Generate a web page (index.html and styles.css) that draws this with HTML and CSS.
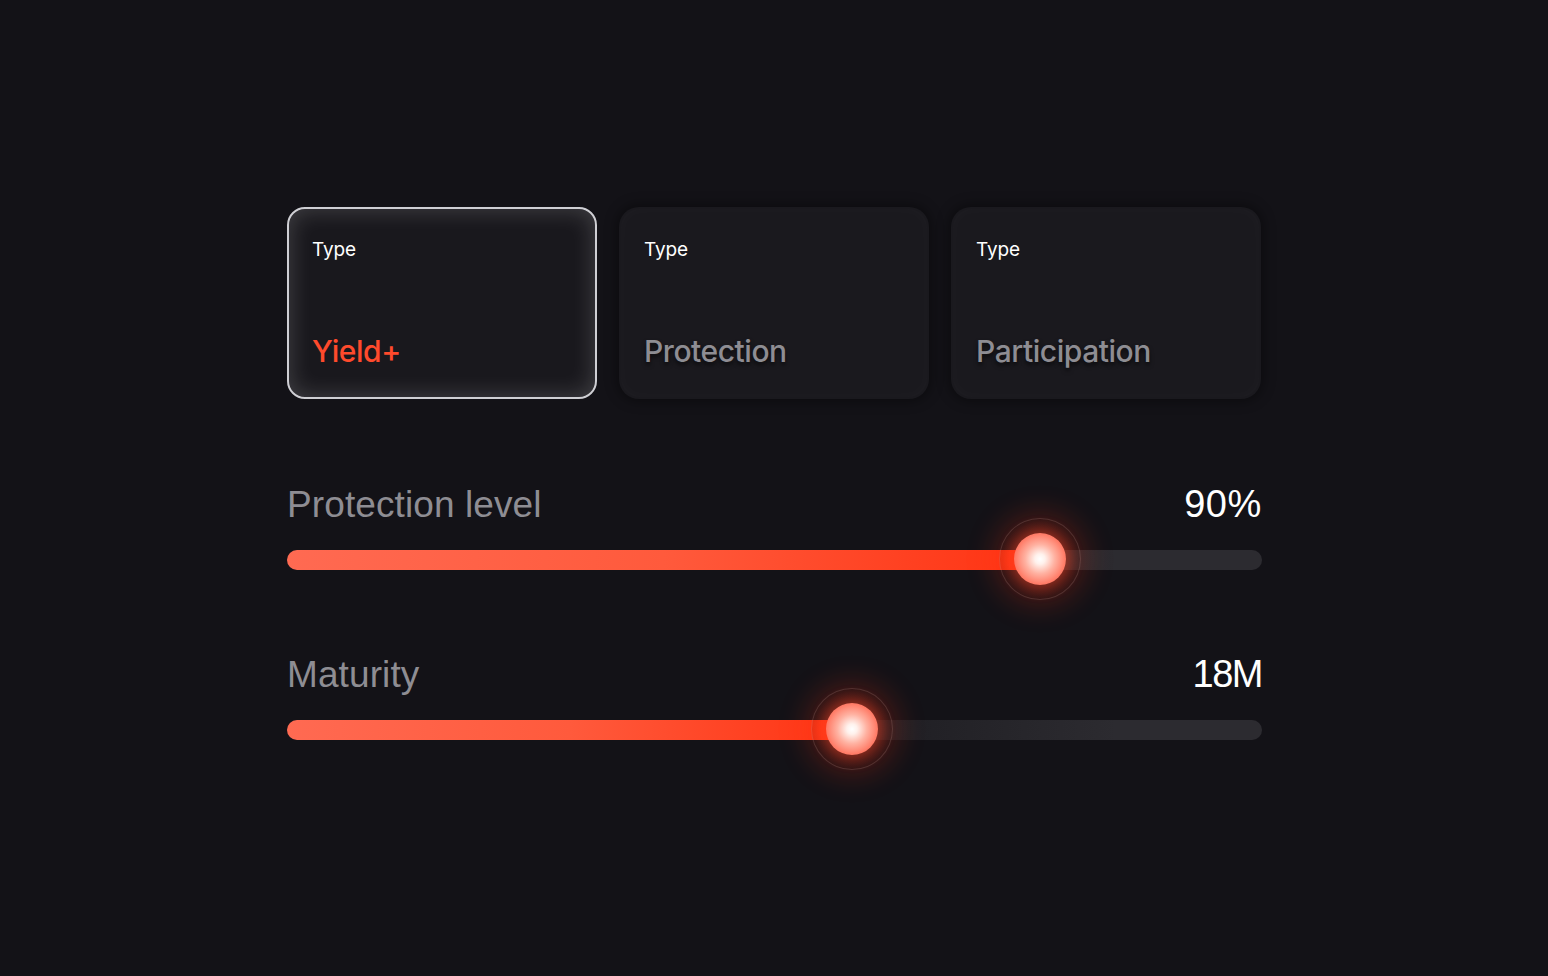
FILE: index.html
```html
<!DOCTYPE html>
<html lang="en">
<head>
<meta charset="utf-8">
<title>Product configurator</title>
<link rel="stylesheet" href="styles.css">
</head>
<body>
<main class="panel">
  <section class="types">
    <div class="card active">
      <span class="card-label">Type</span>
      <span class="card-value">Yield+</span>
    </div>
    <div class="card">
      <span class="card-label">Type</span>
      <span class="card-value">Protection</span>
    </div>
    <div class="card">
      <span class="card-label">Type</span>
      <span class="card-value">Participation</span>
    </div>
  </section>

  <section class="slider first">
    <div class="slider-head">
      <span class="slider-label">Protection level</span>
      <span class="slider-value">90%</span>
    </div>
    <div class="track">
      <div class="fill" style="width: 77.2%"></div>
      <div class="thumb" style="left: 77.2%"><span class="knob"></span></div>
    </div>
  </section>

  <section class="slider second">
    <div class="slider-head">
      <span class="slider-label">Maturity</span>
      <span class="slider-value narrow">18M</span>
    </div>
    <div class="track">
      <div class="fill" style="width: 57.9%"></div>
      <div class="thumb" style="left: 57.9%"><span class="knob"></span></div>
    </div>
  </section>
</main>
</body>
</html>
```

FILE: styles.css
```css
html, body {
  margin: 0;
  padding: 0;
  background: #131217;
  height: 100%;
}

body {
  font-family: "Liberation Sans", Arial, sans-serif;
  color: #ffffff;
}

.panel {
  width: 975px;
  margin-left: 287px;
  padding-top: 207px;
  display: flex;
  flex-direction: column;
}

.types {
  display: flex;
  gap: 22px;
}

.card {
  box-sizing: border-box;
  width: 310px;
  height: 192px;
  border: 2px solid transparent;
  border-radius: 20px;
  padding: 30px 22px 30px 23px;
  display: flex;
  flex-direction: column;
  justify-content: space-between;
  background: #1a191e;
  box-shadow: 0 0 12px 3px rgba(0, 0, 0, 0.35), inset 0 0 16px rgba(255, 255, 255, 0.025);
}

.card.active {
  border-color: #cfcfd4;
  border-radius: 18px;
  background: #19181d;
  box-shadow: inset 0 0 22px 2px rgba(255, 255, 255, 0.17);
}

.card-label {
  font-family: Inter, "Liberation Sans", sans-serif;
  font-weight: 400;
  font-size: 19px;
  line-height: 21px;
  letter-spacing: -0.1px;
  color: #ffffff;
}

.card-value {
  font-family: Inter, "Liberation Sans", sans-serif;
  font-weight: 500;
  font-size: 30px;
  line-height: 31px;
  letter-spacing: -0.45px;
  color: #8e8d93;
  text-shadow: 0 3px 4px rgba(0, 0, 0, 0.6);
}

.card.active .card-value {
  color: #ff4a2c;
  text-shadow: none;
}

.slider {
  display: flex;
  flex-direction: column;
  gap: 26px;
}

.slider.first {
  margin-top: 86px;
}

.slider.second {
  margin-top: 85px;
}

.slider-head {
  display: flex;
  justify-content: space-between;
  align-items: baseline;
  font-size: 37px;
  line-height: 38px;
}

.slider-label {
  color: #8e8d93;
  letter-spacing: 0.1px;
}

.slider-value {
  color: #ffffff;
  font-size: 38px;
  letter-spacing: 0.6px;
}

.slider-value.narrow {
  letter-spacing: -1.5px;
}

.track {
  position: relative;
  height: 20px;
  border-radius: 10px;
  background: linear-gradient(90deg, #1c1b20 0%, #1c1b20 55%, #2c2b30 85%, #2c2b30 100%);
}

.fill {
  height: 100%;
  border-radius: 10px 0 0 10px;
  background: linear-gradient(90deg, #ff6a52 0%, #ff5a3c 50%, #ff3312 100%);
}

.thumb {
  position: absolute;
  top: 50%;
  width: 82px;
  height: 82px;
  margin-left: -41px;
  margin-top: -42px;
  box-sizing: border-box;
  border-radius: 50%;
  border: 1.5px solid rgba(255, 200, 190, 0.16);
  background: radial-gradient(circle, rgba(255, 60, 30, 0.35) 0%, rgba(255, 50, 20, 0.18) 55%, rgba(40, 10, 10, 0.3) 100%);
  box-shadow: 0 0 28px 6px rgba(255, 50, 20, 0.22);
  display: flex;
  align-items: center;
  justify-content: center;
}

.knob {
  width: 52px;
  height: 52px;
  border-radius: 50%;
  background: radial-gradient(circle, #ffffff 0%, #fff1ec 14%, #ffb2a2 40%, #ff6e58 75%, #ff5d47 100%);
  box-shadow: 0 0 14px 4px rgba(255, 70, 40, 0.45);
}
```
